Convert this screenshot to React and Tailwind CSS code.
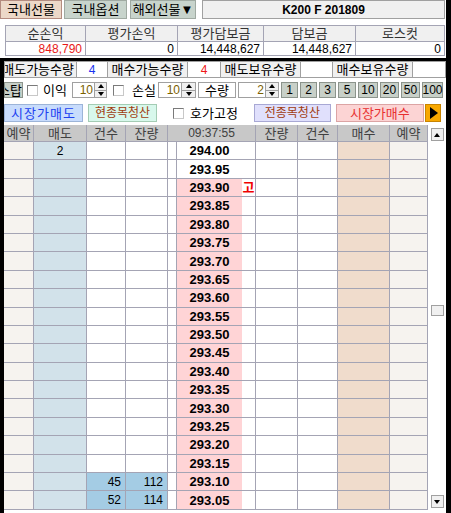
import React from 'react';

const line = 'border-[#a4a4b4]';

function Up() {
    return <div className="w-0 h-0 border-x-[3px] border-x-transparent border-b-[4px] border-b-black" />;
}

function Down() {
    return <div className="w-0 h-0 border-x-[3px] border-x-transparent border-t-[4px] border-t-black" />;
}

function Check({ className = '' }) {
    return (
        <div className={`w-[11px] h-[11px] shrink-0 bg-white border border-t-[#7a7a7a] border-l-[#7a7a7a] border-b-[#c8c8c8] border-r-[#c8c8c8] ${className}`} />
    );
}

function Spin({ value, w, aw, className = '' }) {
    return (
        <div className={`flex h-full ${className}`}>
            <div style={{ width: w }} className="h-full bg-white border border-[#a0a0a0] flex items-center justify-end pr-[1px] text-[12px] text-[#7a6000]">
                {value}
            </div>
            <div style={{ width: aw }} className="h-full flex flex-col border border-l-0 border-[#a0a0a0] bg-[#f0f0f0]">
                <div className="flex-1 flex items-center justify-center border-b border-[#a0a0a0]"><Up /></div>
                <div className="flex-1 flex items-center justify-center"><Down /></div>
            </div>
        </div>
    );
}

// 호가 rows
const prices = Array.from({ length: 20 }, (_, i) => ((29400 - i * 5) / 100).toFixed(2));

const qtyBtns = [
    ['1', 17], ['2', 17], ['3', 17], ['5', 18], ['10', 20], ['20', 19], ['50', 19], ['100', 21],
];

const summary = [
    { title: '순손익', value: '848,790', w: 81, red: true },
    { title: '평가손익', value: '0', w: 92 },
    { title: '평가담보금', value: '14,448,627', w: 86 },
    { title: '담보금', value: '14,448,627', w: 92 },
    { title: '로스컷', value: '0', w: 89 },
];

const cols = 'grid grid-cols-[30px_53px_39px_42px_9px_65px_14px_42px_40px_52px_38px]';

export default function App() {
    return (
        <div className="w-[451px] h-[513px] bg-black overflow-hidden font-['Liberation_Sans','Noto_Sans_CJK_KR',sans-serif] text-[12px] leading-none text-black">
            {/* top section */}
            <div className="w-[446px] h-[58px] bg-white">
                <div className="flex h-[19px]">
                    <div className="w-[62px] h-full bg-[#ecd8c8] border border-[#b48c80] flex items-center justify-center text-[13px]">국내선물</div>
                    <div className="ml-[2px] w-[63px] h-full bg-[#c8d4cc] border border-[#a0aaa2] flex items-center justify-center text-[13px]">국내옵션</div>
                    <div className="ml-[3px] w-[66px] h-full bg-[#c8d4cc] border border-[#a0aaa2] flex items-center justify-center text-[13px]">해외선물▼</div>
                    <div className="ml-[6px] w-[243px] h-full bg-[#f0f0f0] border border-[#a0a0a0] flex items-center justify-center font-bold text-[12px]">K200 F 201809</div>
                </div>
                <div className="ml-[5px] mt-[6px] w-[440px] flex">
                    {summary.map((s, i) => (
                        <div key={s.title} style={{ width: s.w }} className="flex flex-col">
                            <div className={`h-[17px] bg-[#f0f0f0] border-t border-b ${i === 0 ? 'border-l' : ''} border-r ${line} flex items-center justify-center text-[13px] text-[#333]`}>
                                {s.title}
                            </div>
                            <div className={`h-[14px] bg-white border-b ${i === 0 ? 'border-l' : ''} border-r ${line} flex items-center justify-end pr-[3px] ${s.red ? 'text-[#e81818]' : ''}`}>
                                {s.value}
                            </div>
                        </div>
                    ))}
                </div>
            </div>

            {/* bottom section */}
            <div className="ml-[4px] w-[442px] h-[452px] bg-white">
                {/* 수량 */}
                <div className="mt-[3px] h-[17px] flex text-[13px]">
                    <div className="w-[73px] h-full bg-[#f0f0f0] border border-[#a0a0a0] flex items-center justify-end pr-[2px] overflow-hidden whitespace-nowrap">매도가능수량</div>
                    <div className="w-[31px] h-full bg-white border-y border-r border-[#a0a0a0] flex items-center justify-center text-[12px] text-[#1830f0]">4</div>
                    <div className="w-[80px] h-full bg-[#f0f0f0] border-y border-r border-[#a0a0a0] flex items-center justify-center whitespace-nowrap">매수가능수량</div>
                    <div className="w-[33px] h-full bg-white border-y border-r border-[#a0a0a0] flex items-center justify-center text-[12px] text-[#f01818]">4</div>
                    <div className="w-[80px] h-full bg-[#f0f0f0] border-y border-r border-[#a0a0a0] flex items-center justify-center whitespace-nowrap">매도보유수량</div>
                    <div className="w-[32px] h-full bg-white border-y border-r border-[#a0a0a0]" />
                    <div className="w-[80px] h-full bg-[#f0f0f0] border-y border-r border-[#a0a0a0] flex items-center justify-center whitespace-nowrap">매수보유수량</div>
                    <div className="w-[33px] h-full bg-white border-y border-r border-[#a0a0a0]" />
                </div>

                {/* 스탑 */}
                <div className="mt-[4px] h-[16px] flex items-center">
                    <div className="w-[19px] h-full bg-[#c8d0c8] border border-[#8c948c] flex items-center justify-end overflow-hidden whitespace-nowrap text-[13px]">스탑</div>
                    <Check className="ml-[4px]" />
                    <span className="ml-[5px] w-[26px] text-[13px] whitespace-nowrap">이익</span>
                    <Spin value="10" w={23} aw={12} className="ml-[3px]" />
                    <Check className="ml-[6px]" />
                    <span className="ml-[8px] w-[26px] text-[13px] whitespace-nowrap">손실</span>
                    <Spin value="10" w={24} aw={14} className="ml-0" />
                    <div className="ml-[2px] w-[38px] h-full bg-white border border-[#a0a0a0] flex items-center justify-center text-[13px]">수량</div>
                    <Spin value="2" w={28} aw={13} className="ml-[2px]" />
                    <div className="ml-[2px] flex gap-[2px] h-full">
                        {qtyBtns.map(([t, w]) => (
                            <div key={t} style={{ width: w }} className="h-full bg-[#c8d0c8] border border-[#8c948c] flex items-center justify-center">
                                {t}
                            </div>
                        ))}
                    </div>
                </div>

                {/* 주문 버튼 */}
                <div className="mt-[6px] h-[18px] flex items-center">
                    <div className="w-[79px] h-full bg-[#c8dcfc] border border-[#9cb4d8] flex items-center justify-center text-[13px] tracking-[1px] text-[#2040f0]">시장가매도</div>
                    <div className="ml-[5px] w-[69px] h-full bg-[#d8f8ec] border border-[#a4ccb4] flex items-center justify-center text-[#a03c10]">현종목청산</div>
                    <Check className="ml-[16px]" />
                    <span className="ml-[6px] whitespace-nowrap text-[13px]">호가고정</span>
                    <div className="ml-[16px] w-[77px] h-full bg-[#e0e0fc] border border-[#a8a8d4] flex items-center justify-center text-[#a03c10]">전종목청산</div>
                    <div className="ml-[5px] w-[88px] h-full bg-[#fcd4d4] border border-[#dca4a4] flex items-center justify-center text-[13px] text-[#e83030]">시장가매수</div>
                    <div className="ml-[1px] w-[16px] h-full bg-[#f8a800] border border-[#c88400] flex items-center justify-center">
                        <div className="w-0 h-0 border-y-[6px] border-y-transparent border-l-[8px] border-l-black ml-[2px]" />
                    </div>
                </div>

                {/* 호가창 */}
                <div className="mt-[3px] flex">
                    <div className="w-[424px]">
                        <div className={`${cols} h-[17px] bg-[#c8c8c8] text-[#404040] text-[13px]`}>
                            {['예약', '매도', '건수', '잔량'].map((t) => (
                                <div key={t} className={`border-r border-b ${line} flex items-center justify-center`}>{t}</div>
                            ))}
                            <div className={`col-span-3 border-r border-b ${line} flex items-center justify-center text-[12px]`}>09:37:55</div>
                            {['잔량', '건수', '매수', '예약'].map((t, i) => (
                                <div key={t + i} className={`border-r border-b ${line} flex items-center justify-center`}>{t}</div>
                            ))}
                        </div>
                        {prices.map((p, i) => {
                            const pink = i >= 2;
                            const blue = i >= 18;
                            const cnt = i === 18 ? '45' : i === 19 ? '52' : '';
                            const rem = i === 18 ? '112' : i === 19 ? '114' : '';
                            return (
                                <div key={p} className={`${cols} h-[18.4px]`}>
                                    <div className={`bg-[#f6f3ef] border-r border-b ${line}`} />
                                    <div className={`bg-[#d2e2ea] border-r border-b ${line} flex items-center justify-center`}>{i === 0 ? '2' : ''}</div>
                                    <div className={`${blue ? 'bg-[#a4cce4]' : 'bg-white'} border-r border-b ${line} flex items-center justify-end pr-[4px]`}>{cnt}</div>
                                    <div className={`${blue ? 'bg-[#a4cce4]' : 'bg-white'} border-r border-b ${line} flex items-center justify-end pr-[4px]`}>{rem}</div>
                                    <div className={`bg-white border-r border-b ${line}`} />
                                    <div className={`${pink ? 'bg-[#ffd4d6]' : 'bg-white'} border-b ${line} flex items-center justify-center font-bold text-[13px]`}>{p}</div>
                                    <div className={`bg-white border-r border-b ${line} flex items-center justify-center font-bold text-[13px] text-[#f00000]`}>{i === 2 ? '고' : ''}</div>
                                    <div className={`bg-white border-r border-b ${line}`} />
                                    <div className={`bg-white border-r border-b ${line}`} />
                                    <div className={`bg-[#f0dccc] border-r border-b ${line}`} />
                                    <div className={`bg-[#f6f3ef] border-r border-b ${line}`} />
                                </div>
                            );
                        })}
                    </div>

                    {/* scrollbar */}
                    <div className="w-[18px] h-[385px] flex flex-col items-center bg-white">
                        <div className="mt-[3px] w-[13px] h-[13px] bg-[#f0f0f0] border border-[#a0a0a0] flex items-center justify-center"><Up /></div>
                        <div className="h-[164px]" />
                        <div className="w-[13px] h-[11px] bg-[#f0f0f0] border border-[#a0a0a0]" />
                        <div className="flex-1" />
                        <div className="mb-[2px] w-[13px] h-[13px] bg-[#f0f0f0] border border-[#a0a0a0] flex items-center justify-center"><Down /></div>
                    </div>
                </div>
            </div>
        </div>
    );
}
